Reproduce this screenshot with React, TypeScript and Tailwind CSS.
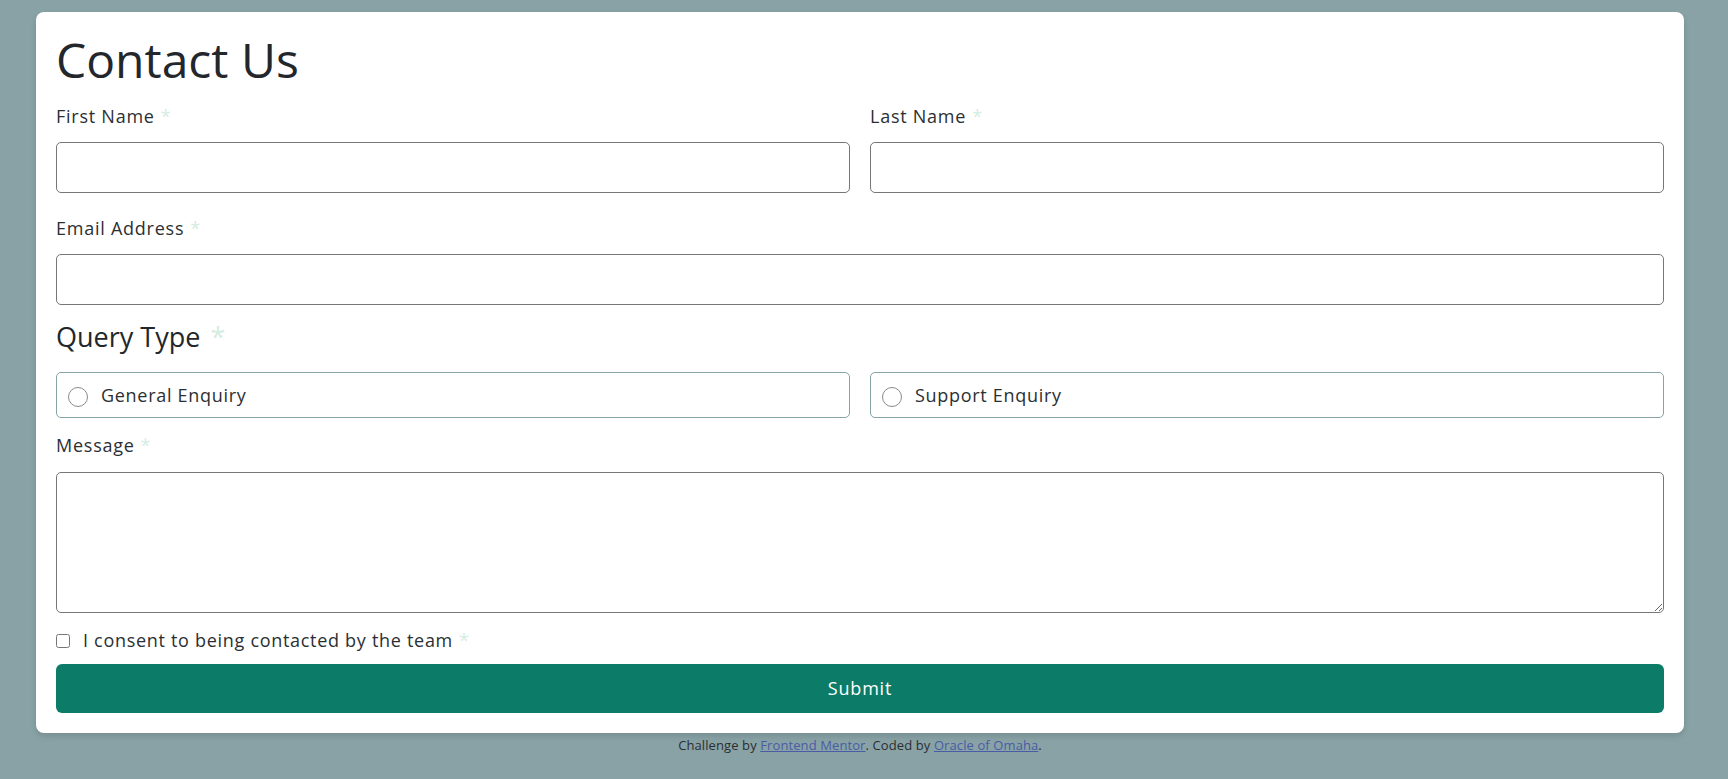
import React from "react";

const font = { fontFamily: '"Open Sans", "Liberation Sans", sans-serif' };

function Req() {
  return <span className="ml-[6px] text-[#d5ede1]">*</span>;
}

function Field({ label, className = "" }: { label: string; className?: string }) {
  return (
    <div className={"flex flex-col " + className}>
      <label className="text-[18px] leading-[27px] tracking-[0.75px] text-[#2b2f33] mb-3">
        {label}
        <Req />
      </label>
      <input
        type="text"
        className="h-[51px] w-full rounded-[5px] border border-[#777777] bg-white px-3 outline-none"
      />
    </div>
  );
}

function Radio({ label }: { label: string }) {
  return (
    <label className="flex h-[46px] items-center rounded-[5px] border border-[#87a3a6] pl-[11px]">
      <span className="mt-1 h-5 w-5 rounded-full border border-[#8a8a8a] bg-white" />
      <span className="ml-[13px] text-[18px] tracking-[0.7px] text-[#2b2f33]">{label}</span>
    </label>
  );
}

export default function App() {
  return (
    <div className="min-h-screen bg-[#88a2a5] pl-9 pr-11 pt-3" style={font}>
      <form className="rounded-lg bg-white p-5 shadow-[0_3px_6px_rgba(0,0,0,0.12)]">
        <h1 className="mb-[15px] text-[48px] leading-[56px] font-normal text-[#23272b]">
          Contact Us
        </h1>

        <div className="grid grid-cols-2 gap-x-5">
          <Field label="First Name" />
          <Field label="Last Name" />
        </div>

        <Field label="Email Address" className="mt-[22px]" />

        <div className="mt-[15px] mb-[18px] text-[27px] leading-[34px] text-[#23272b]">
          Query Type
          <span className="ml-[10px] text-[#d5ede1]">*</span>
        </div>
        <div className="grid grid-cols-2 gap-x-5">
          <Radio label="General Enquiry" />
          <Radio label="Support Enquiry" />
        </div>

        <div className="mt-[14px] flex flex-col">
          <label className="mb-[13px] text-[18px] leading-[27px] tracking-[0.75px] text-[#2b2f33]">
            Message
            <Req />
          </label>
          <textarea className="block h-[141px] w-full rounded-[5px] border border-[#777777] bg-white p-3 outline-none" />
        </div>

        <label className="mt-[14px] mb-[10px] flex items-center text-[18px] leading-[27px] tracking-[0.7px] text-[#2b2f33]">
          <input type="checkbox" className="m-0 h-[14px] w-[14px]" />
          <span className="ml-[13px]">
            I consent to being contacted by the team
            <Req />
          </span>
        </label>

        <button
          type="button"
          className="h-[49px] w-full rounded-md bg-[#0c7c69] text-[18px] font-medium tracking-[0.8px] text-white"
        >
          Submit
        </button>
      </form>

      <p className="mt-[2px] text-center text-[13px] leading-[20px] tracking-[0.1px] text-[#2b2f33]">
        Challenge by{" "}
        <a href="#" className="text-[#4a5ca6] underline">
          Frontend Mentor
        </a>
        . Coded by{" "}
        <a href="#" className="text-[#4a5ca6] underline">
          Oracle of Omaha
        </a>
        .
      </p>
    </div>
  );
}
